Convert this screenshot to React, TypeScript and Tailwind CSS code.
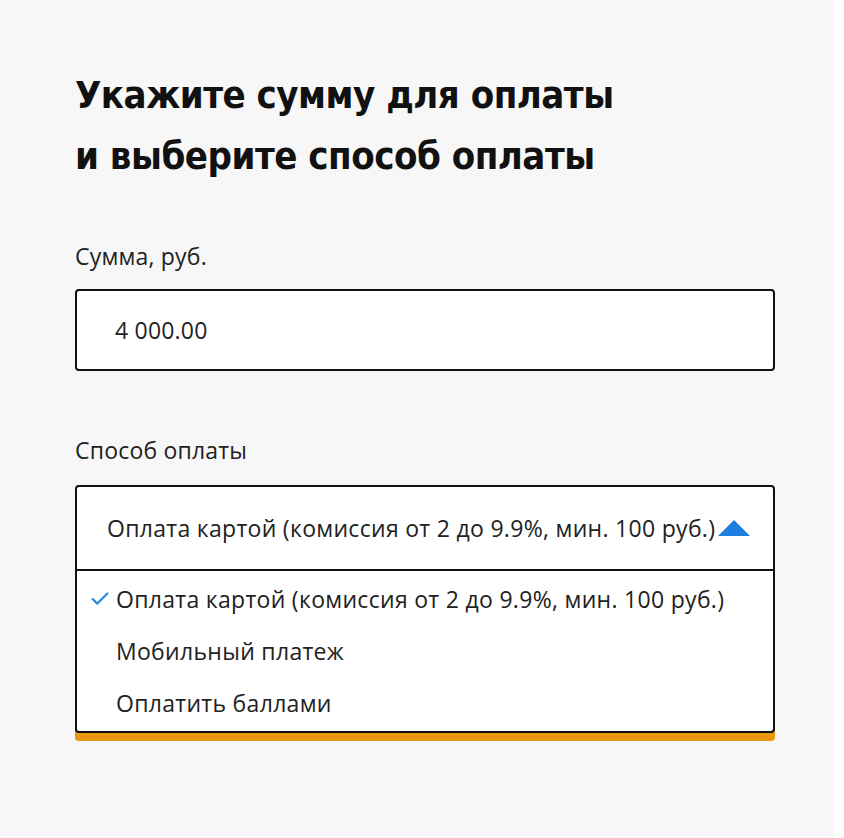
import { Check } from 'lucide-react';

const options = [
  'Оплата картой (комиссия от 2 до 9.9%, мин. 100 руб.)',
  'Мобильный платеж',
  'Оплатить баллами',
];

export default function App() {
  const selected = options[0];

  return (
    <div className="min-h-screen w-full bg-white">
      <div
        className="mr-[11px] min-h-[838px] bg-[#f7f7f7] px-[75px] pt-[65px] text-[#111]"
        style={{ fontFamily: '"Open Sans", "DejaVu Sans", sans-serif' }}
      >
        {/* Heading */}
        <h1
          className="text-[38px] font-bold leading-[61px] tracking-[-0.5px] text-[#111]"
          style={{ fontFamily: '"DejaVu Sans Condensed", "DejaVu Sans", sans-serif', fontStretch: 'condensed' }}
        >
          Укажите сумму для оплаты
          <br />
          и выберите способ оплаты
        </h1>

        {/* Amount */}
        <label className="mt-[54px] block text-[23px] leading-[30px] tracking-[0.2px] text-[#222]">Сумма, руб.</label>
        <div className="mt-[18px] flex h-[82px] w-[700px] items-center rounded-[4px] border-2 border-[#111] bg-white px-[38px]">
          <span className="text-[23px] tracking-[0.2px] text-[#222]">4 000.00</span>
        </div>

        {/* Payment method */}
        <label className="mt-[64px] block text-[23px] leading-[30px] tracking-[0.2px] text-[#222]">Способ оплаты</label>
        <div className="mt-[20px] w-[700px]">
          <div className="flex h-[86px] items-center rounded-t-[4px] border-2 border-[#111] bg-white pl-[30px]">
            <span className="text-[23px] tracking-[0.3px] text-[#222]">{selected}</span>
            <svg width="34" height="20" viewBox="0 0 34 20" className="ml-[2px]">
              <path d="M1 18 L17 2 L33 18 Z" fill="#1f7de0" />
            </svg>
          </div>
          <div className="rounded-b-[4px] border-2 border-t-0 border-[#111] bg-white py-[2px] shadow-[0_8px_0_#e8950f]">
            {options.map((opt) => (
              <div key={opt} className="flex h-[52px] items-center pl-[7px]">
                <span className="flex w-[32px] justify-center">
                  {opt === selected && <Check className="h-[22px] w-[22px] text-[#2b8ee0]" strokeWidth={2.5} />}
                </span>
                <span className="text-[23px] tracking-[0.3px] text-[#222]">{opt}</span>
              </div>
            ))}
          </div>
        </div>
      </div>
    </div>
  );
}
